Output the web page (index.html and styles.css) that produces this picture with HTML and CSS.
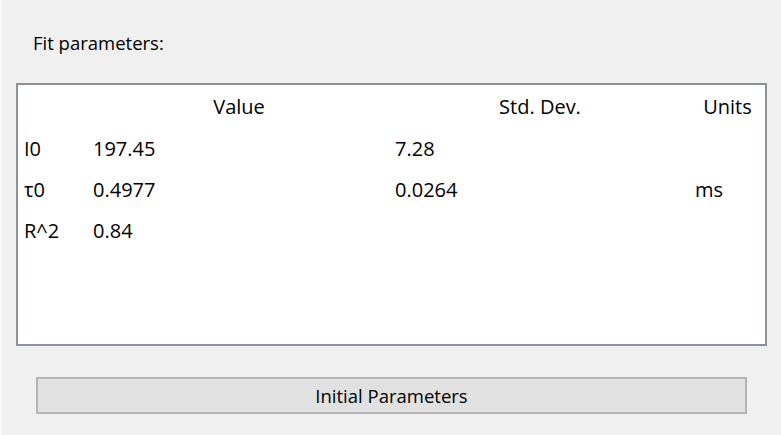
FILE: index.html
```html
<!DOCTYPE html>
<html>
<head>
<meta charset="utf-8">
<link rel="stylesheet" href="styles.css">
</head>
<body>
<div class="page">
  <div class="label">Fit parameters:</div>
  <div class="table">
    <div class="row head">
      <div class="vh"></div>
      <div class="c c1">Value</div>
      <div class="c c2">Std. Dev.</div>
      <div class="c c3">Units</div>
    </div>
    <div class="row">
      <div class="vh">I0</div>
      <div class="c c1">197.45</div>
      <div class="c c2">7.28</div>
      <div class="c c3"></div>
    </div>
    <div class="row">
      <div class="vh">τ0</div>
      <div class="c c1">0.4977</div>
      <div class="c c2">0.0264</div>
      <div class="c c3">ms</div>
    </div>
    <div class="row">
      <div class="vh">R^2</div>
      <div class="c c1">0.84</div>
      <div class="c c2"></div>
      <div class="c c3"></div>
    </div>
  </div>
  <div class="btnwrap"><button class="btn">Initial Parameters</button></div>
</div>
</body>
</html>
```
FILE: styles.css
```css
html, body {
  margin: 0;
  padding: 0;
  background: #f0f0f0;
}
body {
  width: 781px;
  height: 435px;
  overflow: hidden;
  font-family: "Open Sans", "Noto Sans", sans-serif;
  font-size: 18.5px;
  color: #000;
  border-left: 2px solid #f7f7f7;
  box-sizing: border-box;
}
.page {
  padding: 0 14px 0 14px;
}
.label {
  padding: 30px 0 0 17px;
  height: 83px;
  box-sizing: border-box;
  line-height: 26px;
}
.table {
  height: 263px;
  border: 2px solid #8d9199;
  background: #fff;
  box-sizing: border-box;
  font-size: 20px;
}
.row {
  display: grid;
  grid-template-columns: 70px 302px 300px 1fr;
  height: 41px;
  align-items: center;
}
.row.head {
  height: 43px;
}
.vh {
  padding-left: 6px;
}
.c {
  padding-left: 5px;
}
.head .c {
  text-align: center;
  padding-left: 0;
}
.btnwrap {
  padding: 31px 20px 0 20px;
}
.btn {
  display: block;
  width: 100%;
  height: 37px;
  background: #e1e1e1;
  border: 2px solid #b4b4b4;
  font: inherit;
  color: #000;
  padding: 0;
  margin: 0;
}
```
